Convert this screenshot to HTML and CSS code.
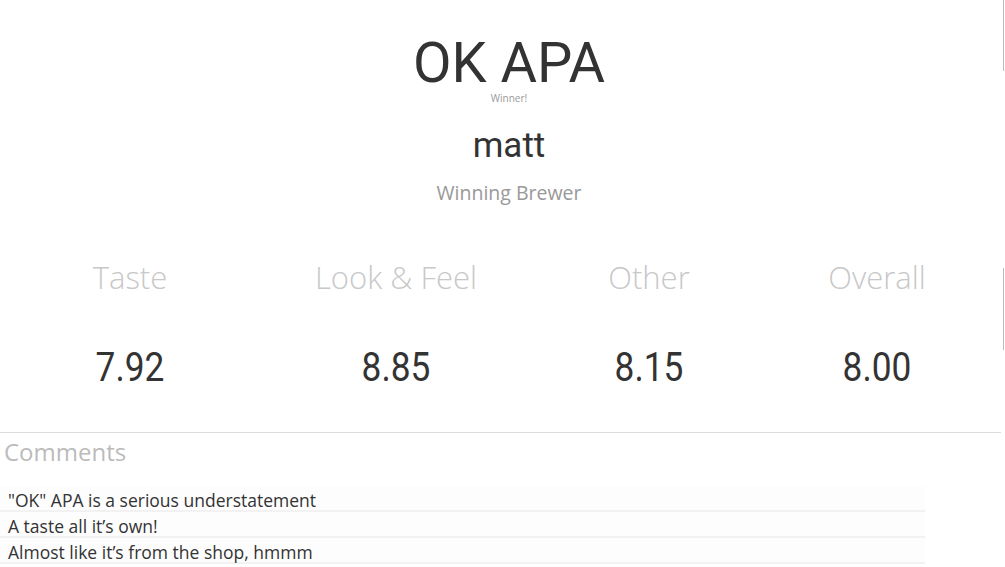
FILE: index.html
```html
<!DOCTYPE html>
<html>
<head>
<meta charset="utf-8">
<link rel="stylesheet" href="styles.css">
</head>
<body>
<div class="page">
  <header class="hero">
    <h1 class="beer">OK APA</h1>
    <div class="winner">Winner!</div>
    <div class="brewer">matt</div>
    <div class="brewer-label">Winning Brewer</div>
  </header>
  <section class="stats">
    <div class="stat"><div class="stat-label">Taste</div><div class="stat-value">7.92</div></div>
    <div class="stat"><div class="stat-label">Look &amp; Feel</div><div class="stat-value">8.85</div></div>
    <div class="stat"><div class="stat-label">Other</div><div class="stat-value">8.15</div></div>
    <div class="stat"><div class="stat-label">Overall</div><div class="stat-value">8.00</div></div>
  </section>
  <section class="comments">
    <h2 class="comments-title">Comments</h2>
    <ul class="comment-list">
      <li class="comment">"OK" APA is a serious understatement</li>
      <li class="comment">A taste all it’s own!</li>
      <li class="comment">Almost like it’s from the shop, hmmm</li>
    </ul>
  </section>
  <div class="edge edge-top"></div>
  <div class="edge edge-mid"></div>
</div>
</body>
</html>
```

FILE: styles.css
```css
html, body {
  margin: 0;
  padding: 0;
  background: #fff;
}
.page {
  position: relative;
  width: 1005px;
  height: 567px;
  overflow: hidden;
  font-family: "Open Sans", "Noto Sans", sans-serif;
}
.hero {
  display: flex;
  flex-direction: column;
  align-items: center;
  padding-top: 34px;
  width: 1018px;
}
.beer {
  margin: 0;
  font-family: Roboto, sans-serif;
  font-weight: 400;
  font-size: 56px;
  line-height: 58px;
  color: #333;
}
.winner {
  font-size: 10px;
  line-height: 12px;
  color: #999;
}
.brewer {
  font-family: Roboto, sans-serif;
  font-size: 35px;
  line-height: 40px;
  color: #333;
  margin-top: 22px;
}
.brewer-label {
  font-size: 19.5px;
  line-height: 24px;
  color: #999;
  margin-top: 15px;
}
.stats {
  display: grid;
  grid-template-columns: 260px 272px 234px 222px;
  margin-top: 52px;
}
.stat {
  display: flex;
  flex-direction: column;
  align-items: center;
}
.stat-label {
  font-weight: 300;
  font-size: 31px;
  line-height: 40px;
  color: #c8c8c8;
}
.stat-value {
  font-family: Roboto, sans-serif;
  font-size: 41px;
  line-height: 46px;
  color: #333;
  margin-top: 47px;
  transform: scaleX(0.86);
}
.comments {
  margin-top: 42px;
  border-top: 1px solid #dcdcdc;
  width: 1001px;
}
.comments-title {
  margin: 0;
  padding-left: 4px;
  font-weight: 400;
  font-size: 24px;
  line-height: 38px;
  color: #bbb;
}
.comment-list {
  list-style: none;
  margin: 15px 0 0;
  padding: 0;
  width: 925px;
}
.comment {
  height: 22px;
  padding-top: 2px;
  line-height: 24px;
  padding-left: 8px;
  font-size: 17.5px;
  color: #333;
  background: #fdfdfd;
  border-bottom: 2px solid #f2f2f2;
}
.edge {
  position: absolute;
  right: 1px;
  width: 1px;
  background: #b8bcbc;
}
.edge-top {
  top: 0;
  height: 71px;
}
.edge-mid {
  top: 268px;
  height: 82px;
}
```
